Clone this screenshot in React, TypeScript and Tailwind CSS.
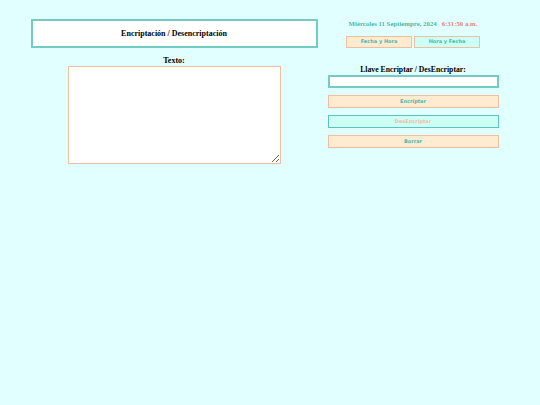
export default function App() {
  return (
    <div className="min-h-[405px] w-full bg-[#e0fffe] font-['Liberation_Serif',serif]">
      <div className="flex">
        {/* Left column */}
        <div className="flex w-[348px] flex-col items-center pt-[19px]">
          <div className="flex h-[29px] w-[287px] items-center justify-center border-2 border-[#74cbc4] bg-white">
            <h1 className="text-[8px] font-bold text-black">Encriptación / Desencriptación</h1>
          </div>
          <p className="mt-[8px] text-[8px] font-bold leading-[10px] text-black">Texto:</p>
          <textarea className="h-[98px] w-[213px] resize border border-[#efbfa0] bg-white outline-none" />
        </div>

        {/* Right column */}
        <div className="ml-[-20px] flex w-[170px] flex-col items-center pt-[19px]">
          <div className="flex gap-[5px] whitespace-nowrap text-[6.8px] font-bold leading-[10px]">
            <span className="text-[#48b9ad]">Miércoles 11 Septiempre, 2024</span>
            <span className="text-[#e08484]">6:31:50 a.m.</span>
          </div>
          <div className="mt-[7px] flex gap-[2px] font-['DejaVu_Sans',sans-serif]">
            <button className="h-[12px] w-[66px] border border-[#efbfa0] bg-[#ffebd0] text-[5px] font-bold text-[#48b9ad]">
              Fecha y Hora
            </button>
            <button className="h-[12px] w-[66px] border border-[#efbfa0] bg-[#ccfff6] text-[5px] font-bold text-[#48b9ad]">
              Hora y Fecha
            </button>
          </div>
          <p className="mt-[17px] whitespace-nowrap text-[7.7px] font-bold leading-[10px] text-black">
            Llave Encriptar / DesEncriptar:
          </p>
          <input className="h-[13px] w-[171px] border-2 border-[#74cbc4] bg-white outline-none" />
          <div className="mt-[7px] flex flex-col gap-[7px] font-['DejaVu_Sans',sans-serif]">
            <button className="h-[13px] w-[171px] border border-[#efbfa0] bg-[#ffebd0] text-[5px] font-bold text-[#48b9ad]">
              Encriptar
            </button>
            <button className="h-[13px] w-[171px] border border-[#5cc2ba] bg-[#ccfff6] text-[5px] font-bold text-[#efbfa0]">
              DesEncriptar
            </button>
            <button className="h-[13px] w-[171px] border border-[#efbfa0] bg-[#ffebd0] text-[5px] font-bold text-[#48b9ad]">
              Borrar
            </button>
          </div>
        </div>
      </div>
    </div>
  )
}
